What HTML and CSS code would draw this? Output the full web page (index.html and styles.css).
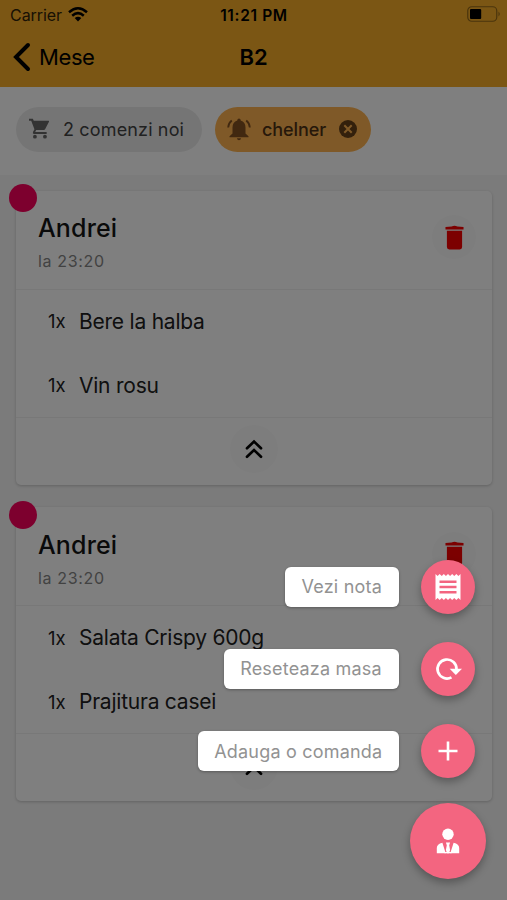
FILE: index.html
```html
<!DOCTYPE html>
<html lang="ro">
<head>
<meta charset="utf-8">
<title>B2</title>
<link rel="stylesheet" href="styles.css">
</head>
<body>
<svg class="defs" aria-hidden="true">
  <symbol id="trash" viewBox="0 0 20 26"><path d="M7 1.5Q10 0 13 1.5L19.500 2V4.500H.5V2L7 1.500ZM2 6H18V23Q18 25.500 15.500 25.500H4.500Q2 25.500 2 23Z"/></symbol>
  <symbol id="collapse" viewBox="0 0 18 20"><path d="M2 9.200 9 2.500 16 9.200M2 17.700 9 11 16 17.700" fill="none" stroke="currentColor" stroke-width="2.700" stroke-linecap="round" stroke-linejoin="miter"/></symbol>
</svg>
<div class="screen">
  <header class="topbar">
    <div class="status">
      <div class="carrier"><span>Carrier</span>
        <svg class="wifi" viewBox="0 0 20 15"><g fill="none" stroke="currentColor" stroke-width="2.500"><path d="M1 5.200Q10-2.600 19 5.200M4.200 8.700Q10 3.600 15.800 8.700"/></g><path d="M6.700 11.100Q10 8.200 13.300 11.100L10 14.500Z"/></svg>
      </div>
      <div class="clock">11:21 PM</div>
      <svg class="battery" viewBox="0 0 34 16"><rect x=".75" y=".75" width="29" height="14.500" rx="4" fill="none" stroke="currentColor" stroke-opacity=".4" stroke-width="1.200"/><rect x="3" y="3" width="11.200" height="10" rx="1"/><path d="M31.500 5.500Q34 8 31.500 10.500Z" opacity=".4"/></svg>
    </div>
    <nav class="nav">
      <a class="back"><svg viewBox="0 0 18 30"><path d="M15 3 3 15 15 27" fill="none" stroke="currentColor" stroke-width="4" stroke-linecap="round" stroke-linejoin="miter"/></svg><span>Mese</span></a>
      <h1>B2</h1>
    </nav>
  </header>
  <div class="chips">
    <div class="chip">
      <svg class="cart" viewBox="0 0 22 22"><path d="M0 .8H4L5 3H20.500Q21.300 3.200 20.900 4L17 11.500Q16.500 12.500 15.300 12.500H7.500L6.500 14.600H18.500V16.700H5Q3.500 16.200 4.200 14.600L5.700 11.800 2.300 3H0Z"/><circle cx="6.200" cy="19.600" r="2"/><circle cx="16.700" cy="19.600" r="2"/></svg>
      <span>2 comenzi noi</span>
    </div>
    <div class="chip chip-waiter">
      <svg class="bell" viewBox="0 0 24 23"><path d="M10.300 2.500V2Q10.500.4 12 .4T13.700 2V2.500Q18.500 4 18.500 9.500V15.500L21.500 18.300V19.300H2.500V18.300L5.500 15.500V9.500Q5.500 4 10.300 2.500ZM9.900 20.300H14.100Q13.700 22.300 12 22.300T9.900 20.300Z"/><path d="M4.800 2.500Q1.500 5 1.200 9.500M19.200 2.500Q22.500 5 22.800 9.500" fill="none" stroke="currentColor" stroke-width="1.900"/></svg>
      <span>chelner</span>
      <svg class="close" viewBox="0 0 18 18"><circle cx="9" cy="9" r="9"/><path d="M5.300 5.300 12.700 12.700M12.700 5.300 5.300 12.700" stroke="#ffb350" stroke-width="2"/></svg>
    </div>
  </div>
  <main class="orders">
    <article class="card">
      <i class="dot"></i>
      <div class="card-head"><div><h2>Andrei</h2><p>la 23:20</p></div><div class="round delete"><svg><use href="#trash"/></svg></div></div>
      <ul><li><b>1x</b><span>Bere la halba</span></li><li><b>1x</b><span>Vin rosu</span></li></ul>
      <div class="card-foot"><div class="round collapse"><svg><use href="#collapse"/></svg></div></div>
    </article>
    <article class="card">
      <i class="dot"></i>
      <div class="card-head"><div><h2>Andrei</h2><p>la 23:20</p></div><div class="round delete"><svg><use href="#trash"/></svg></div></div>
      <ul><li><b>1x</b><span>Salata Crispy 600g</span></li><li><b>1x</b><span>Prajitura casei</span></li></ul>
      <div class="card-foot"><div class="round collapse"><svg><use href="#collapse"/></svg></div></div>
    </article>
  </main>
</div>
<div class="backdrop"></div>
<div class="actions">
  <div class="action"><span class="label nota">Vezi nota</span><div class="fab"><svg viewBox="0 0 26 28"><path fill-rule="evenodd" d="M.5 1 2.580 3 4.670 1 6.750 3 8.830 1 10.920 3 13 1 15.080 3 17.170 1 19.250 3 21.330 1 23.420 3 25.500 1V27L23.420 25 21.330 27 19.250 25 17.170 27 15.080 25 13 27 10.920 25 8.830 27 6.750 25 4.670 27 2.580 25 .5 27ZM4.500 7.600V10.100H21.500V7.600ZM4.500 12.800V15.300H21.500V12.800ZM4.500 18V20.500H21.500V18Z"/></svg></div></div>
  <div class="action"><span class="label masa">Reseteaza masa</span><div class="fab"><svg viewBox="0 0 26 28"><path d="M16.500 22.400A9.500 9.500 0 1 1 21.500 14.500" fill="none" stroke="currentColor" stroke-width="2.700"/><path d="M14.700 13.800H27L20.800 20Z"/></svg></div></div>
  <div class="action"><span class="label comanda">Adauga o comanda</span><div class="fab"><svg viewBox="0 0 26 28"><path d="M11.700 4.500H14.300V12.700H22.500V15.300H14.300V23.500H11.700V15.300H3.500V12.700H11.700Z"/></svg></div></div>
  <div class="fab fab-main"><svg viewBox="0 0 24 26"><circle cx="12" cy="6.300" r="5.700"/><path d="M.8 25.300V20Q.8 16 6.400 14.700L9.700 25.300ZM23.200 25.300V20Q23.200 16 17.600 14.700L14.300 25.300ZM9.900 14.500H14.100L13.200 17.200 14.100 22 12.900 25.300H11.100L9.900 22 10.800 17.200Z"/><path d="M8.500 25.300H15.500V24H8.500Z"/></svg></div>
</div>
</body>
</html>
```

FILE: styles.css
```css
* { box-sizing: border-box; }
body { margin: 0; height: 900px; overflow: hidden; font-family: Inter, "Liberation Sans", sans-serif; color: #000; position: relative; }
h1, h2, p, ul { margin: 0; padding: 0; }
svg { display: block; fill: currentColor; overflow: visible; }
span, h1, h2, p, b { white-space: nowrap; }
.defs { display: none; }
.screen { height: 900px; background: #f6f6f6; }
.backdrop { position: absolute; inset: 0; background: rgba(0, 0, 0, .5); }

.topbar { height: 87px; background: #f7ad28; }
.status { height: 29px; padding: 0 6px 0 10px; display: grid; grid-template-columns: 1fr auto 1fr; align-items: center; }
.carrier { display: flex; align-items: center; gap: 6px; font-size: 16px; letter-spacing: -.05px; color: #302208; }
.wifi { width: 20px; height: 15px; color: #000; }
.clock { font-size: 15.5px; font-weight: 600; letter-spacing: .65px; margin: 1px 3px 0 0; }
.battery { width: 34px; height: 16px; justify-self: end; margin: -1px 0 0 0; }
.nav { height: 56px; display: grid; grid-template-columns: 1fr auto 1fr; align-items: center; padding: 0 13px; }
.back { display: flex; align-items: center; gap: 8px; font-size: 22px; letter-spacing: -.4px; }
.back svg { width: 18px; height: 30px; }
.nav h1 { font-size: 22px; font-weight: 600; letter-spacing: -.2px; }

.chips { height: 88px; padding: 20px 16px 0; display: flex; gap: 13px; background: #fff; }
.chip { width: 186px; height: 45px; border-radius: 23px; background: #ebebeb; padding-left: 13px; display: flex; align-items: center; font-size: 18px; letter-spacing: .15px; color: #424242; }
.cart { width: 21px; height: 21px; margin: -2px 13px 0 0; color: #666; }
.chip-waiter { width: 156px; padding-left: 12px; background: #ffb350; color: #4d3015; font-weight: 500; letter-spacing: -.1px; }
.bell { width: 24px; height: 23px; margin: -1px 11px 0 0; color: #825020; }
.close { width: 18px; height: 18px; margin: -2px 0 0 13px; color: #664018; }

.orders { padding: 15.500px 15px 0 16px; display: grid; gap: 22.700px; }
.card { position: relative; height: 294px; background: #fff; border-radius: 5px; box-shadow: 0 1px 3px rgba(0, 0, 0, .2); }
.dot { position: absolute; left: -7px; top: -6.500px; width: 28px; height: 28px; border-radius: 50%; background: #fa005c; }
.card-head { height: 99px; display: flex; justify-content: space-between; padding: 19.500px 16px 0 22px; border-bottom: 1px solid #f0f0f0; }
h2 { font-size: 25px; line-height: 36px; font-weight: 500; letter-spacing: .15px; color: #151515; }
.card-head p { margin-top: 5px; font-size: 16px; line-height: 20px; letter-spacing: .65px; color: #858585; }
.round { width: 44px; height: 44px; border-radius: 50%; background: #fbfbfb; display: grid; place-items: center; }
.delete { color: #f90000; margin-top: 5px; }
.delete svg { width: 19px; height: 25px; }
.card ul { list-style: none; height: 128px; border-bottom: 1px solid #f0f0f0; }
.card li { height: 64px; display: flex; align-items: center; padding: 0 0 1px 32px; font-size: 21px; letter-spacing: -.23px; color: #202020; }
.card b { width: 31px; font-size: 18.500px; font-weight: 400; letter-spacing: 0; }
.card-foot { height: 63.500px; display: grid; place-items: center; }
.collapse { width: 48px; height: 48px; }
.collapse svg { width: 18px; height: 20px; }

.actions { position: absolute; right: 21.500px; top: 559.500px; display: flex; flex-direction: column; align-items: flex-end; gap: 27.700px; }
.action { display: flex; align-items: center; gap: 22px; padding-right: 10.500px; }
.label { height: 39.500px; border-radius: 6px; background: #fff; display: grid; place-items: center; font-size: 18px; letter-spacing: .2px; color: #929292; box-shadow: 0 1px 3px rgba(0, 0, 0, .3); }
.nota { width: 113.500px; }
.masa { width: 175px; }
.comanda { width: 200.500px; }
.fab { width: 54.500px; height: 54.500px; border-radius: 50%; background: #f36580; color: #fff; display: grid; place-items: center; box-shadow: 0 4px 8px rgba(0, 0, 0, .3); }
.fab svg { width: 26px; height: 28px; }
.fab-main { width: 76px; height: 76px; margin-top: -3px; }
.fab-main svg { width: 24px; height: 26px; }
```
